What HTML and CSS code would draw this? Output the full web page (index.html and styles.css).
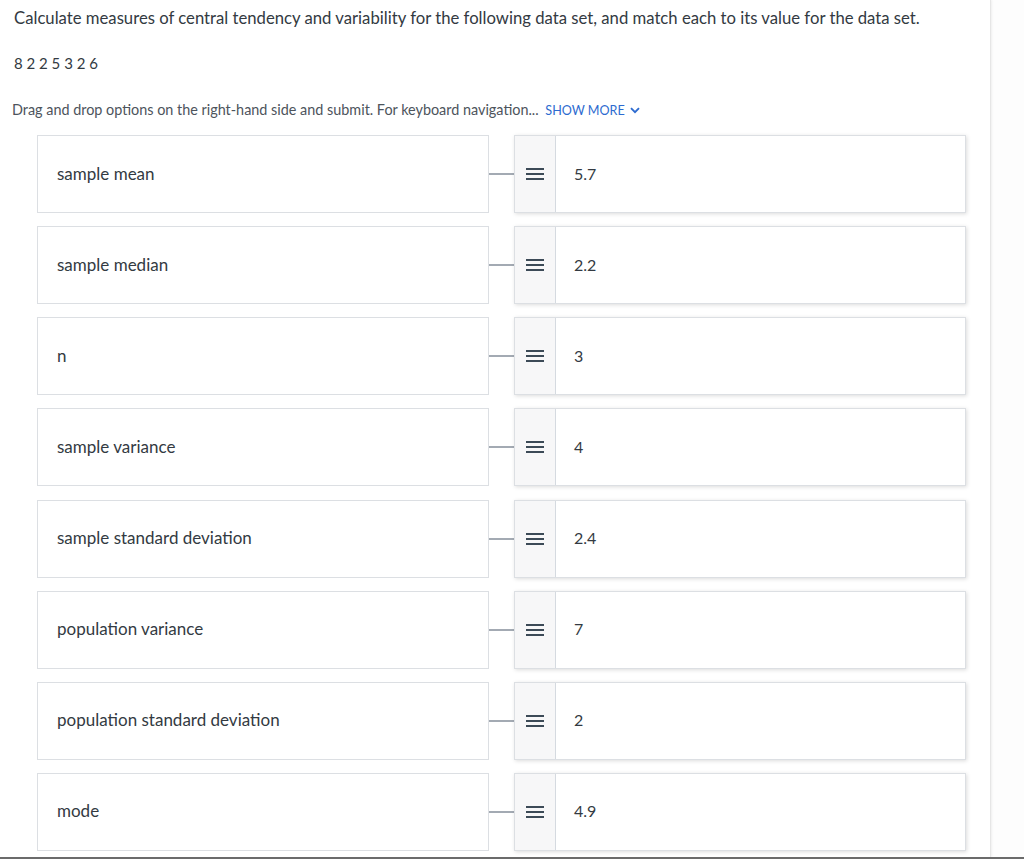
FILE: index.html
```html
<!DOCTYPE html>
<html lang="en">
<head>
<meta charset="utf-8">
<title>Matching</title>
<link rel="stylesheet" href="styles.css">
</head>
<body>
<div class="frame">
  <main class="page">
    <p class="question">Calculate measures of central tendency and variability for the following data set, and match each to its value for the data set.</p>
    <p class="data">8 2 2 5 3 2 6</p>
    <p class="hint">Drag and drop options on the right-hand side and submit. For keyboard navigation... <span class="more">SHOW MORE <svg class="chev" width="10" height="7" viewBox="0 0 10 7"><path d="M1 1.2 L5 5.2 L9 1.2" fill="none" stroke="#2d6bd0" stroke-width="1.9"/></svg></span></p>
    <div class="rows">
      <div class="row"><div class="term">sample mean</div><div class="link"></div><div class="answer"><div class="handle"><svg width="18" height="14" viewBox="0 0 18 14"><path d="M0 2h18M0 7h18M0 12h18" stroke="#3c4a57" stroke-width="2"/></svg></div><div class="value">5.7</div></div></div>
      <div class="row"><div class="term">sample median</div><div class="link"></div><div class="answer"><div class="handle"><svg width="18" height="14" viewBox="0 0 18 14"><path d="M0 2h18M0 7h18M0 12h18" stroke="#3c4a57" stroke-width="2"/></svg></div><div class="value">2.2</div></div></div>
      <div class="row"><div class="term">n</div><div class="link"></div><div class="answer"><div class="handle"><svg width="18" height="14" viewBox="0 0 18 14"><path d="M0 2h18M0 7h18M0 12h18" stroke="#3c4a57" stroke-width="2"/></svg></div><div class="value">3</div></div></div>
      <div class="row"><div class="term">sample variance</div><div class="link"></div><div class="answer"><div class="handle"><svg width="18" height="14" viewBox="0 0 18 14"><path d="M0 2h18M0 7h18M0 12h18" stroke="#3c4a57" stroke-width="2"/></svg></div><div class="value">4</div></div></div>
      <div class="row"><div class="term">sample standard deviation</div><div class="link"></div><div class="answer"><div class="handle"><svg width="18" height="14" viewBox="0 0 18 14"><path d="M0 2h18M0 7h18M0 12h18" stroke="#3c4a57" stroke-width="2"/></svg></div><div class="value">2.4</div></div></div>
      <div class="row"><div class="term">population variance</div><div class="link"></div><div class="answer"><div class="handle"><svg width="18" height="14" viewBox="0 0 18 14"><path d="M0 2h18M0 7h18M0 12h18" stroke="#3c4a57" stroke-width="2"/></svg></div><div class="value">7</div></div></div>
      <div class="row"><div class="term">population standard deviation</div><div class="link"></div><div class="answer"><div class="handle"><svg width="18" height="14" viewBox="0 0 18 14"><path d="M0 2h18M0 7h18M0 12h18" stroke="#3c4a57" stroke-width="2"/></svg></div><div class="value">2</div></div></div>
      <div class="row"><div class="term">mode</div><div class="link"></div><div class="answer"><div class="handle"><svg width="18" height="14" viewBox="0 0 18 14"><path d="M0 2h18M0 7h18M0 12h18" stroke="#3c4a57" stroke-width="2"/></svg></div><div class="value">4.9</div></div></div>
    </div>
  </main>
</div>
</body>
</html>
```
FILE: styles.css
```css
html, body {
  margin: 0;
  padding: 0;
  background: #fdfdfd;
}
body {
  font-family: Lato, "Open Sans", "Liberation Sans", sans-serif;
  color: #333a42;
  overflow: hidden;
}
.frame {
  height: 857px;
  border-bottom: 2px solid #6b6b6b;
  overflow: hidden;
}
.page {
  width: 991px;
  height: 857px;
  background: #ffffff;
  border-right: 1px solid #e6e6e6;
  box-shadow: 1px 0 2px rgba(0,0,0,0.06);
  box-sizing: border-box;
  padding: 7px 0 0 0;
}
.question {
  margin: 0 0 0 14px;
  font-size: 16.7px;
  line-height: 22px;
  color: #333a42;
}
.data {
  margin: 24px 0 0 14px;
  font-size: 15px;
  line-height: 20px;
  color: #333a42;
}
.hint {
  margin: 28px 0 0 12px;
  font-size: 14.4px;
  line-height: 18px;
  color: #4d545c;
}
.more {
  color: #2d6bd0;
  margin-left: 3px;
  font-size: 12.6px;
}
.chev {
  margin-left: 2px;
  vertical-align: 1px;
}
.rows {
  margin: 15px 0 0 37px;
  display: flex;
  flex-direction: column;
  gap: 13.14px;
}
.row {
  display: flex;
  align-items: center;
  height: 78px;
}
.term {
  box-sizing: border-box;
  width: 452px;
  height: 78px;
  border: 1px solid #dcdfe3;
  display: flex;
  align-items: center;
  padding: 0 0 2px 19px;
  font-size: 17px;
  color: #333a42;
}
.link {
  width: 25px;
  height: 2px;
  background: #a3aab3;
}
.answer {
  box-sizing: border-box;
  width: 452px;
  height: 78px;
  border: 1px solid #dcdfe3;
  box-shadow: 1px 1px 4px rgba(0,0,0,0.14);
  display: flex;
  background: #ffffff;
}
.handle {
  width: 40px;
  background: #f7f7f8;
  border-right: 1px solid #d5dae0;
  display: flex;
  align-items: center;
  justify-content: center;
}
.value {
  display: flex;
  align-items: center;
  padding: 0 0 2px 18px;
  font-size: 16px;
  color: #333a42;
}
```
